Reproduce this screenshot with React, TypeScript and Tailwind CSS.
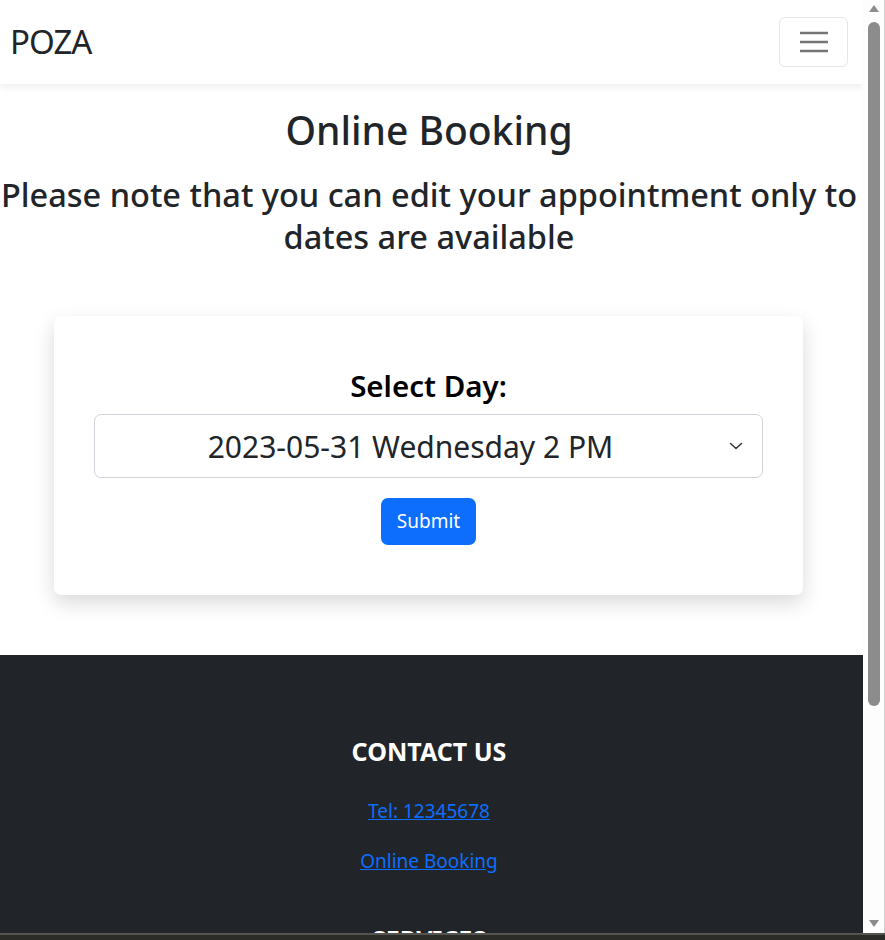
import React from 'react'

const font = { fontFamily: '"Noto Sans", "Open Sans", sans-serif' }

function Navbar() {
  return (
    <nav className="h-[84px] bg-white flex items-center justify-between pl-[10px] pr-[15px] shadow-[0_4px_6px_rgba(0,0,0,0.06)] relative z-10">
      <span className="text-[33px] text-[#212529] font-normal tracking-[-1px]">POZA</span>
      <button className="w-[69px] h-[50px] rounded-[6px] border border-[#e5e5e5] flex items-center justify-center">
        <svg width="32" height="24" viewBox="0 0 32 24">
          <path d="M2 3h28M2 12h28M2 21h28" stroke="#757575" strokeWidth="2.4" />
        </svg>
      </button>
    </nav>
  )
}

function BookingCard() {
  return (
    <div className="ml-[54px] w-[749px] h-[279px] bg-white rounded-[7px] shadow-[0_8px_20px_rgba(0,0,0,0.15)] px-[40px] pt-[52px] flex flex-col items-center">
      <label className="text-[29.5px] font-semibold text-black leading-[36px]">Select Day:</label>
      <div className="mt-[10px] w-full h-[64px] rounded-[7px] border border-[#ced4da] flex items-center">
        <span className="flex-1 pl-4 text-center text-[30px] text-[#212529]">2023-05-31 Wednesday 2 PM</span>
        <span className="w-[52px] flex justify-center">
          <svg width="14" height="8" viewBox="0 0 14 8">
            <path d="M1.5 1.5l5.5 5 5.5-5" fill="none" stroke="#343a40" strokeWidth="1.6" strokeLinecap="round" strokeLinejoin="round" />
          </svg>
        </span>
      </div>
      <button className="mt-[20px] h-[47px] px-4 rounded-[7px] bg-[#0d6efd] text-white text-[19px]">Submit</button>
    </div>
  )
}

function Footer() {
  return (
    <footer className="bg-[#212529] pt-[80px] pb-[40px] pr-[5px] flex flex-col items-center">
      <h5 className="text-[25px] font-bold text-white leading-[32px]">CONTACT US</h5>
      <a href="#" className="mt-[28px] text-[19px] text-[#0d6efd] underline leading-[32px]">Tel: 12345678</a>
      <a href="#" className="mt-[18px] text-[19px] text-[#0d6efd] underline leading-[32px]">Online Booking</a>
      <h5 className="mt-[46px] text-[25px] font-bold text-white leading-[32px]">SERVICES</h5>
      <div className="h-[200px]" />
    </footer>
  )
}

function Scrollbar() {
  return (
    <div className="w-[22px] bg-[#fdfdfd] border-r border-[#d0d0d0] flex flex-col items-center">
      <svg className="mt-[4px]" width="12" height="9" viewBox="0 0 12 9">
        <path d="M6 1 11 8H1z" fill="#8c8c8c" />
      </svg>
      <div className="mt-[9px] w-[12px] h-[684px] rounded-[6px] bg-[#8c8c8c]" />
      <div className="flex-1" />
      <svg className="mb-[5px]" width="12" height="9" viewBox="0 0 12 9">
        <path d="M1 1h10L6 8z" fill="#8c8c8c" />
      </svg>
    </div>
  )
}

export default function App() {
  return (
    <div className="w-[885px] h-[940px] flex flex-col overflow-hidden" style={font}>
      <div className="h-[933px] flex">
        <div className="w-[863px] overflow-hidden bg-white">
          <Navbar />
          <h1 className="mt-[22px] pr-[5px] text-center text-[39px] font-medium text-[#212529] leading-[47px]">Online Booking</h1>
          <h1 className="mt-[21px] pr-[5px] text-center text-[32.5px] font-medium text-[#212529] leading-[42px] whitespace-nowrap">
            Please note that you can edit your appointment only to
            <br />
            dates are available
          </h1>
          <div className="mt-[58px] mb-[60px]">
            <BookingCard />
          </div>
          <Footer />
        </div>
        <Scrollbar />
      </div>
      <div className="h-[7px] bg-[#2b2b27] border-t-2 border-[#55554f]" />
    </div>
  )
}
